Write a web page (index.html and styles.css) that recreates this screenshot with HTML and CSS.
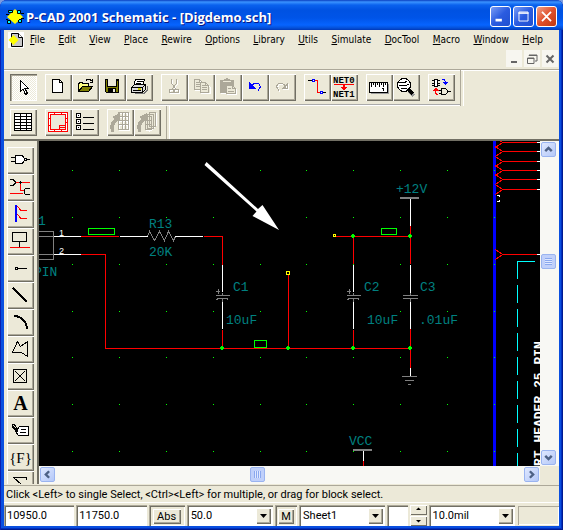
FILE: index.html
```html
<!DOCTYPE html>
<html lang="en">
<head>
<meta charset="utf-8">
<title>P-CAD 2001 Schematic - [Digdemo.sch]</title>
<link rel="stylesheet" href="styles.css">
</head>
<body>
<div class="window">
  <header class="titlebar">
    <svg class="app-icon" width="18" height="18" viewBox="0 0 18 18"><path d="M9 1l8 8-8 7-8-7z" fill="#ff0"/><path d="M1.500 12.500h3v3h-3zM12.500 11.500h3v3h-3zM2.500 2.500h4v2h-4zM11.500 2.500h3v3h-3z" fill="#0ff" stroke="#000"/><path d="M5 6h8v6H5z" fill="#ff0"/><path d="M0 6.500h3M15 5.500h3M0 11.500h2M15 10.500h3" stroke="#000"/></svg>
    <h1>P-CAD 2001 Schematic - [Digdemo.sch]</h1>
    <button class="caption" aria-label="Minimize"><svg viewBox="0 0 21 21"><path d="M5 13h7v3H5z" fill="#fff"/></svg></button>
    <button class="caption" aria-label="Maximize"><svg viewBox="0 0 21 21"><path d="M5.500 5.500h10v10h-10zM5 6.500h11M5 7h11" fill="none" stroke="#fff"/></svg></button>
    <button class="caption close" aria-label="Close"><svg viewBox="0 0 21 21"><path d="M5.500 5.500l10 10M15.500 5.500l-10 10" stroke="#fff" stroke-width="2"/></svg></button>
  </header>

  <nav class="menubar">
    <svg class="doc-icon" width="16" height="16" viewBox="0 0 16 16"><path d="M0 0h16v16H0z" fill="#fff"/><path d="M3.500 1.500h7l4 4v9h-11z" fill="#c8c8c8" stroke="#000"/><path d="M10.500 1.500v4h4" fill="#fff" stroke="#000"/><path d="M5.500 3l5 5-5 5-5-5z" fill="#ff0"/></svg>
    <div class="menus">
      <button><u>F</u>ile</button><button><u>E</u>dit</button><button><u>V</u>iew</button><button><u>P</u>lace</button><button><u>R</u>ewire</button><button><u>O</u>ptions</button><button><u>L</u>ibrary</button><button><u>U</u>tils</button><button><u>S</u>imulate</button><button><u>D</u>ocTool</button><button><u>M</u>acro</button><button><u>W</u>indow</button><button><u>H</u>elp</button>
    </div>
  </nav>
  <div class="mdi">
    <button aria-label="Minimize document"><svg viewBox="0 0 16 16"><path d="M5 11h6" stroke="#666" stroke-width="2"/></svg></button>
    <button aria-label="Restore document"><svg viewBox="0 0 16 16"><path d="M5 4.500V4h8v6h-2M3.500 7h6.500v5.500H3.500zM3 7.500h7M5 4.500h8" fill="none" stroke="#666"/></svg></button>
    <button aria-label="Close document"><svg viewBox="0 0 16 16"><path d="M4.500 4.500l7 7M11.500 4.500l-7 7" stroke="#666" stroke-width="2"/></svg></button>
  </div>

  <div class="toolbar first">
    <div class="group"><button class="tool pressed" aria-label="Select"><svg viewBox="0 0 27 27"><path d="M10.500 6.500v11L13 15l2.500 5.500 2-1-2.500-5h3.500z" fill="#fff" stroke="#000"/></svg></button></div>
    <div class="group">
      <button class="tool" aria-label="New"><svg viewBox="0 0 27 27"><path d="M7.500 5.500h7l3 3v10h-10z" fill="#fff" stroke="#000"/><path d="M14.500 5.500v3h3" fill="none" stroke="#000"/></svg></button>
      <button class="tool" aria-label="Open"><svg viewBox="0 0 27 27"><path d="M6.500 17.500v-8h1v-1h3v1h6v3" fill="#ffff80" stroke="#000"/><path d="M6.500 17.500l4-5h10l-4 5z" fill="#808000" stroke="#000"/><path d="M14 7c1-2.500 4-2 5.500 0M20.500 5v3.500h-3" fill="none" stroke="#000"/></svg></button>
      <button class="tool" aria-label="Save"><svg viewBox="0 0 27 27"><path d="M6.500 5.500h13v13h-12l-1-1z" fill="#808000" stroke="#000"/><path d="M9 5h8v7H9z" fill="#ece9d8"/><path d="M8.500 5v7h9V5M18 6.500h1" fill="none" stroke="#000"/><path d="M9 14h8v5H9z"/><path d="M14 15h2v3h-2z" fill="#ece9d8"/></svg></button>
      <button class="tool" aria-label="Print"><svg viewBox="0 0 27 27"><path d="M7.500 12.500l2-7h9l-2 7z" fill="#fff" stroke="#000"/><path d="M10.500 7.500h6M10 9.500h5" stroke="#000"/><path d="M5.500 13.500l3-3h11v5l-3 3h-11z" fill="#ddd" stroke="#000"/><path d="M5.500 13.500h11v5M16.500 13.500l3-3" fill="none" stroke="#000"/><path d="M7 16.500h8" stroke="#000"/><path d="M12 15h3" stroke="#cc0" stroke-width="2"/><path d="M9 19.500h9l3-3v-5" fill="none" stroke="#777"/></svg></button>
    </div>
    <div class="group">
      <button class="tool" aria-label="Cut" disabled><svg viewBox="0 0 27 27"><g fill="none" stroke="#fff" transform="translate(1 1)"><path d="M10.500 5v4l4 6M15.500 5v4l-4 6"/><circle cx="10.500" cy="17" r="2"/><circle cx="15.500" cy="17" r="2"/></g><g fill="none" stroke="#aca899"><path d="M10.500 5v4l4 6M15.500 5v4l-4 6"/><circle cx="10.500" cy="17" r="2"/><circle cx="15.500" cy="17" r="2"/></g></svg></button>
      <button class="tool" aria-label="Copy" disabled><svg viewBox="0 0 27 27"><g fill="#ece9d8"><path d="M7.500 6.500h5l3 3v7h-8zM12.500 6.500v3h3M9 9.500h3M9 11.500h5M9 13.500h5" stroke="#fff"/><path d="M6.500 5.500h5l3 3v7h-8zM11.500 5.500v3h3M8 8.500h3M8 10.500h5M8 12.500h5" stroke="#aca899"/><path d="M13.500 9.500h5l4 4v6h-9z" stroke="#fff"/><path d="M12.500 8.500h5l3 3v7h-8zM17.500 8.500v3h3M14 11.500h3M14 13.500h5M14 15.500h5" stroke="#aca899"/></g></svg></button>
      <button class="tool" aria-label="Paste" disabled><svg viewBox="0 0 27 27"><path d="M6 7h13v13H6z" fill="#fff"/><path d="M5 6h4V5h2V4h2v1h2v1h4v13H5z" fill="#aca899"/><path d="M8 7.500h8" stroke="#ece9d8"/><path d="M12.500 12.500h6l3 3v5h-9z" fill="#ece9d8" stroke="#fff"/><path d="M11.500 11.500h6l3 3v5h-9zM17.500 11.500v3h3M13 14.500h3M13 17.500h6" fill="#ece9d8" stroke="#aca899"/></svg></button>
      <button class="tool" aria-label="Undo"><svg viewBox="0 0 27 27"><path d="M7 8v7h7z" fill="#00f"/><path d="M9 12.500l2-2c3-3 8-1 7 3l-2 3" fill="none" stroke="#00f"/></svg></button>
      <button class="tool" aria-label="Redo" disabled><svg viewBox="0 0 27 27"><path d="M20 9v7h-7z" fill="#fff"/><path d="M19 8v7h-7z" fill="#aca899"/><path d="M18 13.500l-2-2c-3-3-8-1-7 3l2 3" fill="none" stroke="#fff"/><path d="M17 12.500l-2-2c-3-3-8-1-7 3l2 3" fill="none" stroke="#aca899"/></svg></button>
    </div>
    <div class="group">
      <button class="tool" aria-label="Rewire"><svg viewBox="0 0 27 27"><path d="M11 6h3v12h3v1h-4V7h-2z" fill="red"/><path d="M4 6.500h4M19 18.500h3" stroke="#000"/><path d="M8.500 5.500h2v2h-2zM16.500 17.500h2v2h-2z" fill="#fff" stroke="#00f"/></svg></button>
      <button class="tool" aria-label="Rename net"><svg viewBox="0 0 27 27"><text class="net" x="2" y="9">NET0</text><text class="net" x="2" y="23">NET1</text><path d="M3 10h20v1H3zM12 11h2v2h2v1h-1v1h-1v1h-2v-1h-1v-1h-1v-1h2z" fill="red"/></svg></button>
    </div>
    <div class="group">
      <button class="tool" aria-label="Measure"><svg viewBox="0 0 27 27"><path d="M4.500 9.500h18v10h-18z" fill="#999"/><path d="M3.500 8.500h18v10h-18z" fill="#fff" stroke="#000"/><path d="M5.500 9v4M7.500 9v2M9.500 9v4M11.500 9v2M13.500 9v4M15.500 9v2M17.500 9v4M19.500 9v2M17.500 14v3M16 14.500h1" stroke="#000"/></svg></button>
      <button class="tool" aria-label="Zoom"><svg viewBox="0 0 27 27"><path d="M16 17l5 5" stroke="#999" stroke-width="3"/><circle cx="11" cy="11" r="6.500" fill="#fff" stroke="#000"/><path d="M6 9l3-1 2 1 3-2M6 12l3-1 3 1 4-2M8 15l3-1 3 0" fill="none" stroke="#000"/><path d="M15 15l5 5" stroke="#000" stroke-width="3"/></svg></button>
    </div>
    <div class="group">
      <button class="tool" aria-label="Swap symbols"><svg viewBox="0 0 27 27"><path d="M6.500 5.500h3v7h-3zM4 6.500h2M4 9h2M4 11.500h2M10 6.500h2M10 9h2M10 11.500h2" fill="#fff" stroke="#000"/><path d="M14 5.500h2l2 3" fill="none" stroke="#00f"/><path d="M14 8h7l-3.500 3z" fill="#00f"/><path d="M4 17h7l-3.500-3.500z" fill="red"/><path d="M7 17v2l3 2" fill="none" stroke="red"/><path d="M13.500 14.500h2c5 0 5 6 0 6h-2zM11 16h2M11 19h2M19 17.500h4" fill="none" stroke="#000"/></svg></button>
    </div>
  </div>
  <div class="toolbar second">
    <div class="group"><button class="tool" aria-label="Table"><svg viewBox="0 0 27 27"><path d="M4.500 4.500h17v17h-17zM4 7.500h18M4 10h18M4 13h18M4 16h18M4 19h18M10.500 4v18M16.500 4v18" fill="#fff" stroke="#000"/></svg></button></div>
    <div class="group">
      <button class="tool" aria-label="Title sheets"><svg viewBox="0 0 27 27"><path d="M3.500 3.500h19v19h-19z" fill="#fff" stroke="red"/><path d="M5.500 5.500h15v15h-15z" fill="#ece9d8" stroke="red"/><path d="M9.500 3v3M16.500 3v3M9.500 20v3M16.500 20v3M3 9.500h3M3 16.500h3M20 9.500h3M20 13.500h3M14.500 20v-4h6M14 18.500h7" fill="none" stroke="red"/></svg></button>
      <button class="tool" aria-label="List"><svg viewBox="0 0 27 27"><path d="M4.500 4.500h4v4h-4zM4.500 10.500h4v4h-4zM4.500 16.500h4v4h-4z" fill="#fff" stroke="#000"/><path d="M6 6.500h1M6 12.500h1M6 18.500h1M11 8.500h11M11 14.500h11M11 20.500h11" stroke="#000"/></svg></button>
    </div>
    <div class="group">
      <button class="tool" aria-label="Export table" disabled><svg viewBox="0 0 27 27"><path d="M12.500 4.500h10v17h-10zM12 8.500h10M12 12.500h10M12 16.500h10M16.500 5v17M20.500 5v17" fill="none" stroke="#fff"/><path d="M11.500 3.500h10v17h-10zM11 7.500h10M11 11.500h10M11 15.500h10M15.500 4v17M18.500 4v17" fill="none" stroke="#aca899"/><path d="M4 23c-2-6 0-10 3-13L5 8l8-4v8l-2-1c-3 3-5 6-4 12z" fill="#aca899"/></svg></button>
      <button class="tool" aria-label="Export sheets" disabled><svg viewBox="0 0 27 27"><path d="M17.500 3.500h4v12l-4 4zM14.500 5.500h4v13l-4 3zM11.500 7.500h4v13h-4zM12 11.500h3M12 15.500h3" fill="#ece9d8" stroke="#fff" transform="translate(1 1)"/><path d="M15.500 3.500h6v14h-6zM13.500 5.500h6v14h-6zM11.500 7.500h6v13h-6zM12 11.500h5M12 15.500h5" fill="#ece9d8" stroke="#aca899"/><path d="M4 23c-2-6 0-10 3-13L5 8l8-4v8l-2-1c-3 3-5 6-4 12z" fill="#aca899"/></svg></button>
    </div>
  </div>

  <main class="workspace">
    <aside class="palette">
      <button class="tool" aria-label="Place part"><svg viewBox="0 0 27 27"><path d="M8.500 8.500h5c5 0 5 8 0 8h-5zM4 10.500h4M4 14.500h4M20 12.500h3M17.500 11.500h2v2h-2z" fill="#fff" stroke="#000"/></svg></button>
      <button class="tool" aria-label="Place connection"><svg viewBox="0 0 27 27"><path d="M8 8.500h15M13.500 8v8h4M3 19.500h13" fill="none" stroke="red"/><path d="M3 5.500h3l2 2v2l-2 2H3M13 7v3M12 8.500h3M23 14.500h-4l-2 1v4l2 1h4" fill="none" stroke="#000"/></svg></button>
      <button class="tool" aria-label="Place bus"><svg viewBox="0 0 27 27"><path d="M9 4v17" stroke="#00f" stroke-width="2"/><path d="M10 5l4 4.500h6M10 13l4 4.500h6" fill="none" stroke="red"/></svg></button>
      <button class="tool" aria-label="Place port"><svg viewBox="0 0 27 27"><path d="M5.500 4.500h14v9h-14zM12.500 13.500v6" fill="none" stroke="#000"/><path d="M3 19.500h20" stroke="red"/></svg></button>
      <button class="tool" aria-label="Place pin"><svg viewBox="0 0 27 27"><path d="M8.500 12.500h2v2h-2zM11 13.500h9" fill="none" stroke="#000"/></svg></button>
      <button class="tool" aria-label="Place line"><svg viewBox="0 0 27 27"><path d="M6 6l14 14" stroke="#000" stroke-width="2"/></svg></button>
      <button class="tool" aria-label="Place arc"><svg viewBox="0 0 27 27"><path d="M7 7c7 0 13 6 13 13" fill="none" stroke="#000" stroke-width="2"/></svg></button>
      <button class="tool" aria-label="Place polygon"><svg viewBox="0 0 27 27"><path d="M5.500 16.500l5-11 3 5 7-5v15l-6-4z" fill="none" stroke="#000"/></svg></button>
      <button class="tool" aria-label="Place point"><svg viewBox="0 0 27 27"><path d="M6.500 6.500h13v13h-13zM8 8l10 10M18 8L8 18" fill="none" stroke="#000"/></svg></button>
      <button class="tool letter">A</button>
      <button class="tool" aria-label="Place attribute"><svg viewBox="0 0 27 27"><path d="M12.500 9.500h9v9h-10l-3-4z" fill="#fff" stroke="#000"/><path d="M14 12.500h5M13 15.500h6" stroke="#000"/><path d="M10 13.500c-3-1-5-3-5-6 2-1 4 2 5 4M5 8l5 6" fill="none" stroke="#000"/><path d="M8 13h3v2H8z"/></svg></button>
      <button class="tool field">{F}</button>
      <button class="tool" aria-label="Place symbol"><svg viewBox="0 0 27 27"><path d="M6 6.500h13v2M7 7l7 6-7 6h12" fill="none" stroke="#000"/></svg></button>
    </aside>

    <svg class="schematic" role="img" aria-label="Schematic sheet">
      <defs>
        <path id="grid-row" d="M72 .5h1M119 .5h1M166 .5h1M213 .5h1M260 .5h1M306 .5h1M353 .5h1M400 .5h1M447 .5h1M494 .5h1"/>
        <path id="entry" d="M-7.500-5l7 5H34M-7.500 5l7-5"/>
        <path id="node" d="M-1-2h2v1h1v2h-1v1h-2v-1h-1v-2h1z"/>
        <path id="polar" d="M-6.500-7.500h4M-4.500-10v5M-7-3.500H7M-6 .500l2-1H4l2 1M0-6v3M0-.500v3"/>
      </defs>
      <g transform="translate(-39 -141)">
        <path class="bus" d="M494.500 141v1200"/>
        <g class="green">
          <use href="#grid-row" y="170"/><use href="#grid-row" y="217"/><use href="#grid-row" y="264"/><use href="#grid-row" y="311"/><use href="#grid-row" y="357"/><use href="#grid-row" y="404"/><use href="#grid-row" y="451"/>
        </g>
        <path class="gray" d="M39 231.500h14.500v28H39M39 236.500h14M39 254.500h14M147.500 236.500l2-5 5 9 5-9 5 9 4-9 5 9 2-4M403 295.500h15M403 298.500h15M410.500 293v2M410.500 299v3M402 376.500h15M405 380.500h9M408 384.500h3"/>
        <path class="gray bar" d="M400 198h19M353 450h19"/>
        <path class="white" d="M54 236.500h27M54 254.500h27M120 236.500h28M175 236.500h28M222.500 265v27M222.500 301v28M353.500 265v27M353.500 301v28M410.500 199v27M410.500 265v28M410.500 302v27M410.500 368v8M363.500 451v10M537 142.500h3M537 151.500h3M537 161.500h3M537 170.500h3M537 179.500h3M537 189.500h3M537 254.500h3"/>
        <path class="red" d="M81 236.500h38M81 254.500h24.500v94h305M204 236.500h18.500V265M222.500 330v18M288.500 275v73M336 236.500h74M353.500 236v28M353.500 330v18M410.500 226v38M410.500 329v39M363.500 461v6"/>
        <g class="red">
          <use href="#entry" x="503" y="142.500"/><use href="#entry" x="503" y="151.500"/><use href="#entry" x="503" y="161.500"/><use href="#entry" x="503" y="170.500"/><use href="#entry" x="503" y="179.500"/><use href="#entry" x="503" y="189.500"/><use href="#entry" x="503" y="254.500"/>
        </g>
        <g class="gray"><use href="#polar" x="222.500" y="299"/><use href="#polar" x="353.500" y="299"/></g>
        <path class="green" d="M88.500 228.500h26v6h-26zM254.500 340.500h12v7h-12zM381.500 228.500h15v6h-15z"/>
        <g><use href="#node" x="222" y="348"/><use href="#node" x="288" y="348"/><use href="#node" x="353" y="348"/><use href="#node" x="410" y="348"/><use href="#node" x="353" y="236"/><use href="#node" x="410" y="236"/></g>
        <path class="yellow" d="M286.500 271.500h3v3h-3zM333.500 234.500h2v2h-2z"/>
        <path class="cyan" d="M517.500 261v1200"/><path class="cyan top" d="M517 261.500h18"/>
        <path class="white" d="M500 196.500l-1-1h-2M497 201.500h2l1-1"/>
        <path class="arrow" d="M204.500 165l2-3 51.500 47 4.500-4 16.500 25-26.500-14 4-4.500z"/>
        <g class="label">
          <text x="38" y="225">1</text><text x="34" y="276">PIN</text>
          <text x="149" y="228">R13</text><text x="149" y="256">20K</text>
          <text x="233" y="291">C1</text><text x="226" y="324">10uF</text>
          <text x="364" y="291">C2</text><text x="367" y="324">10uF</text>
          <text x="420" y="291">C3</text><text x="419" y="324">.01uF</text>
          <text x="396" y="193">+12V</text><text x="349" y="445">VCC</text>
        </g>
        <text class="pin" x="59" y="236">1</text><text class="pin" x="59" y="254">2</text>
        <text class="header-label" transform="translate(543 466) rotate(-90)">RT HEADER 25 PIN</text>
      </g>
    </svg>

    <div class="scroll vertical">
      <button aria-label="Scroll up"><svg viewBox="0 0 16 16"><path d="M4 10l4-4 4 4"/></svg></button>
      <span class="thumb"></span>
      <button aria-label="Scroll down"><svg viewBox="0 0 16 16"><path d="M4 6l4 4 4-4"/></svg></button>
    </div>
    <div class="scroll horizontal">
      <button aria-label="Scroll left"><svg viewBox="0 0 16 16"><path d="M10 4L6 8l4 4"/></svg></button>
      <span class="thumb"></span>
      <button aria-label="Scroll right"><svg viewBox="0 0 16 16"><path d="M6 4l4 4-4 4"/></svg></button>
    </div>
  </main>

  <p class="prompt">Click &lt;Left&gt; to single Select, &lt;Ctrl&gt;&lt;Left&gt; for multiple, or drag for block select.</p>

  <footer class="statusbar">
    <input class="coord" aria-label="X coordinate" value="10950.0">
    <input class="coord" aria-label="Y coordinate" value="11750.0">
    <span class="well"><button>Abs</button></span>
    <span class="combo"><select aria-label="Grid"><option>50.0</option></select><svg viewBox="0 0 15 16"><path d="M4 6h7L7.500 10z"/></svg></span>
    <span class="well small"><button>M</button></span>
    <span class="combo"><select aria-label="Sheet"><option>Sheet1</option></select><svg viewBox="0 0 15 16"><path d="M4 6h7L7.500 10z"/></svg></span>
    <input class="layer" aria-label="Layer color">
    <span class="spinner"><button aria-label="Next"><svg viewBox="0 0 16 9"><path d="M6 5h5L8.500 2.500z"/></svg></button><button aria-label="Previous"><svg viewBox="0 0 16 9"><path d="M6 4h5L8.500 6.500z"/></svg></button></span>
    <span class="combo"><select aria-label="Line width"><option>10.0mil</option></select><svg viewBox="0 0 15 16"><path d="M4 6h7L7.500 10z"/></svg></span>
    <span class="info"></span>
  </footer>
</div>
</body>
</html>
```
FILE: styles.css
```css
* { box-sizing: border-box; }

body {
  margin: 0;
  background: #7b9be0;
  font: 11px/16px Roboto, "Liberation Sans", sans-serif;
  color: #000;
}

button, input, select {
  margin: 0;
  padding: 0;
  border: 0;
  border-radius: 0;
  background: none;
  font: inherit;
  color: inherit;
}

svg { display: block; }

.window {
  display: flex;
  flex-direction: column;
  height: 100vh;
  padding: 0 4px 4px;
  border-radius: 7px 7px 0 0;
  overflow: hidden;
  background: #0a4fe0;
  box-shadow: inset 1px 0 #0a1fb0, inset -1px -1px #001a90, inset -2px -2px #0030c0;
}

/* Title bar */
.titlebar {
  display: flex;
  align-items: center;
  flex: none;
  gap: 2px;
  height: 30px;
  margin: 0 -4px;
  padding: 3px 6px 0;
  background: linear-gradient(#0a3fc0 0, #3a93ff 2px, #0a62ee 5px, #0052e2 10px, #0054e8 18px, #0664ff 25px, #0450d8 28px, #0038b8 30px);
}

.titlebar h1 {
  flex: 1;
  margin: 0;
  font: bold 13px/18px "Open Sans", "Noto Sans", sans-serif;
  color: #fff;
  text-shadow: 1px 1px #0a1883;
  white-space: nowrap;
}

.caption {
  width: 21px;
  height: 21px;
  border: 1px solid #fff;
  border-radius: 3px;
  background: linear-gradient(135deg, #7a9df5, #2a5be0 50%, #2050d0);
}

.caption svg { width: 19px; height: 19px; }
.caption.close { background: linear-gradient(135deg, #f0a088, #e0502c 50%, #c03810); }

/* Menus */
.menubar, .mdi {
  display: flex;
  flex: none;
  background: #ece9d8;
}

.menubar {
  align-items: center;
  gap: 6px;
  height: 20px;
  padding: 0 16px 0 4px;
  font: 10px/14px "DejaVu Sans Condensed", "Noto Sans", sans-serif;
}

.doc-icon { flex: none; }

.menus {
  display: flex;
  flex: 1;
  justify-content: space-between;
}

.mdi {
  justify-content: flex-end;
  gap: 2px;
  height: 19px;
  padding: 0 1px;
}

.mdi button {
  width: 16px;
  height: 17px;
  background: #f7f6f0;
}

/* Toolbars */
.toolbar {
  display: flex;
  flex: none;
  background: #ece9d8;
}

.toolbar::after {
  content: "";
  width: 2px;
  border-left: 1px solid #aca899;
  border-right: 1px solid #fff;
}

.first {
  border-top: 1px solid #aca899;
  box-shadow: inset 0 1px #fff;
  height: 37px;
}

.first::before, .second::before { content: ""; width: 6px; }

.second { height: 33px; }

.group {
  display: flex;
  padding: 4px 8px 3px 0;
}

.group:last-child { padding-right: 5px; }
.second .group { padding-top: 3px; }

.first .group, .first::before, .first::after {
  height: 36px;
  border-bottom: 2px groove #fff;
}

.tool {
  flex: none;
  width: 27px;
  height: 27px;
  background: #ece9d8;
  box-shadow: inset 1px 1px #fff, inset -1px -1px #716f64, inset -2px -2px #aca899;
  shape-rendering: crispEdges;
}

.tool svg { width: 27px; height: 27px; }

.pressed {
  background: repeating-conic-gradient(#fff 0 25%, #ece9d8 0 50%) 0 0 / 2px 2px;
  box-shadow: inset 1px 1px #716f64, inset 2px 2px #aca899, inset -1px -1px #fff;
}

.net { font: bold 9px "Liberation Mono", monospace; }

/* Work area */
.workspace {
  display: grid;
  flex: 1;
  grid-template-columns: 35px minmax(0, 1fr) 19px;
  grid-template-rows: minmax(0, 1fr) 18px;
  min-height: 0;
  border-top: 2px solid #716f64;
  background: #ece9d8;
}

.palette {
  display: flex;
  flex-direction: column;
  grid-row: 1 / 3;
  padding: 6px 3px 0;
  border-right: 2px solid #716f64;
  overflow: hidden;
}

.letter { font: bold 20px/27px "Liberation Serif", serif; }
.field { font: 15px/24px "Liberation Serif", serif; }

.schematic {
  width: 100%;
  height: 100%;
  background: #000;
  overflow: hidden;
  shape-rendering: crispEdges;
}

.schematic path { fill: none; }
.red { stroke: #f00; }
.white { stroke: #fff; }
.gray { stroke: #808080; }
.green { stroke: #0f0; }
.yellow { stroke: #ff0; }
.bus { stroke: #00f; stroke-width: 3; }
.bar { stroke-width: 2; }
.cyan { stroke: #0ff; stroke-dasharray: 18 6; }
.top { stroke-dasharray: none; }
.schematic #node { fill: #0f0; }
.schematic .arrow { fill: #fff; shape-rendering: auto; }
.label { font: 13px "Liberation Mono", monospace; fill: #008080; }
.pin { font: 9px "Liberation Sans", sans-serif; fill: #fff; }
.header-label { font: bold 13px "Liberation Mono", monospace; fill: #fff; white-space: pre; }

/* Scroll bars */
.scroll {
  display: flex;
  justify-content: space-between;
  padding: 1px;
  background: #f8f8f4;
}

.vertical { flex-direction: column; padding-right: 3px; }
.horizontal { grid-column: 2; padding-bottom: 2px; }

.scroll button, .thumb {
  flex: none;
  width: 15px;
  height: 15px;
  border: 1px solid #9ab4f0;
  border-radius: 2px;
  background: linear-gradient(135deg, #dfe8ff, #b4c8f8);
}

.scroll button svg { width: 13px; height: 13px; }
.scroll path { fill: none; stroke: #4d6185; stroke-width: 3; }

.vertical .thumb {
  margin: 97px 0 auto;
  padding: 3px;
  background: repeating-linear-gradient(#8aa8ee 0 1px, #dfe8ff 1px 2px) content-box, #c0d0fa;
}

.horizontal .thumb {
  margin: 0 auto 0 195px;
  padding: 3px;
  background: repeating-linear-gradient(90deg, #8aa8ee 0 1px, #dfe8ff 1px 2px) content-box, #c0d0fa;
}

/* Status rows */
.prompt {
  flex: none;
  height: 21px;
  margin: 0;
  padding: 2px;
  border: solid #ece9d8;
  border-width: 1px 0 2px;
  background: #ece9d8;
  box-shadow: inset 0 1px #aca899, inset 0 -1px #fff;
  white-space: nowrap;
  overflow: hidden;
}

.statusbar {
  display: flex;
  flex: none;
  gap: 2px;
  height: 21px;
  background: #ece9d8;
}

.coord, .combo, .layer, .well {
  background: #fff;
  box-shadow: inset 1px 1px #aca899, inset 2px 2px #716f64, inset -1px -1px #fff;
}

.coord {
  flex: 70 1 70px;
  min-width: 0;
  padding: 0 3px;
}

.well {
  flex: 36 1 36px;
  padding: 4px 4px 2px;
  background: #ece9d8;
}

.small { flex: 22 1 22px; padding: 4px 3px 2px; }

.well button {
  display: block;
  width: 100%;
  height: 15px;
  background: #ece9d8;
  line-height: 15px;
  box-shadow: inset 1px 1px #fff, inset -1px -1px #716f64, inset -2px -2px #aca899;
}

.combo {
  position: relative;
  flex: 86 1 86px;
  min-width: 0;
}

.combo select {
  width: 100%;
  height: 21px;
  padding: 0 18px 0 4px;
  appearance: none;
}

.combo svg {
  position: absolute;
  top: 3px;
  right: 2px;
  width: 15px;
  height: 16px;
  background: #ece9d8;
  box-shadow: inset 1px 1px #fff, inset -1px -1px #716f64, inset -2px -2px #aca899;
  pointer-events: none;
}

.layer { flex: 21 1 21px; min-width: 0; }

.spinner {
  display: flex;
  flex: 16 1 16px;
  flex-direction: column;
  gap: 1px;
}

.spinner button {
  height: 10px;
  background: #ece9d8;
  box-shadow: inset 1px 1px #fff, inset -1px -1px #716f64;
}

.info {
  flex: 41 1 41px;
  margin: 1px 0 1px 1px;
  box-shadow: inset 1px 1px #aca899, inset -1px -1px #fff;
}
```
